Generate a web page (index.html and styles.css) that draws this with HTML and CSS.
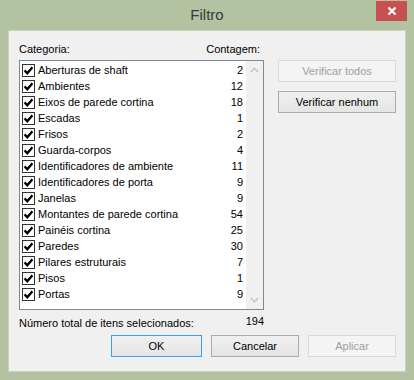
FILE: index.html
```html
<!DOCTYPE html>
<html lang="pt">
<head>
<meta charset="utf-8">
<title>Filtro</title>
<link rel="stylesheet" href="styles.css">
</head>
<body>
<div class="window">
  <div class="titlebar">
    <span></span>
    <span class="title">Filtro</span>
    <span class="close"><svg width="10" height="10" viewBox="0 0 10 10"><path d="M1.5 1.5 L8.5 8.5 M8.5 1.5 L1.5 8.5" stroke="#fff" stroke-width="2.2"/></svg></span>
  </div>
  <div class="client">
    <div class="main">
      <div class="leftcol">
        <div class="headers"><span>Categoria:</span><span>Contagem:</span></div>
        <div class="listbox">
          <div class="rows">
            <div class="row"><span class="cb"><svg viewBox="0 0 11 11"><path d="M1.6 5.4 L4.3 8.3 L9.4 2.2"/></svg></span><span class="name">Aberturas de shaft</span><span class="count">2</span></div>
            <div class="row"><span class="cb"><svg viewBox="0 0 11 11"><path d="M1.6 5.4 L4.3 8.3 L9.4 2.2"/></svg></span><span class="name">Ambientes</span><span class="count">12</span></div>
            <div class="row"><span class="cb"><svg viewBox="0 0 11 11"><path d="M1.6 5.4 L4.3 8.3 L9.4 2.2"/></svg></span><span class="name">Eixos de parede cortina</span><span class="count">18</span></div>
            <div class="row"><span class="cb"><svg viewBox="0 0 11 11"><path d="M1.6 5.4 L4.3 8.3 L9.4 2.2"/></svg></span><span class="name">Escadas</span><span class="count">1</span></div>
            <div class="row"><span class="cb"><svg viewBox="0 0 11 11"><path d="M1.6 5.4 L4.3 8.3 L9.4 2.2"/></svg></span><span class="name">Frisos</span><span class="count">2</span></div>
            <div class="row"><span class="cb"><svg viewBox="0 0 11 11"><path d="M1.6 5.4 L4.3 8.3 L9.4 2.2"/></svg></span><span class="name">Guarda-corpos</span><span class="count">4</span></div>
            <div class="row"><span class="cb"><svg viewBox="0 0 11 11"><path d="M1.6 5.4 L4.3 8.3 L9.4 2.2"/></svg></span><span class="name">Identificadores de ambiente</span><span class="count">11</span></div>
            <div class="row"><span class="cb"><svg viewBox="0 0 11 11"><path d="M1.6 5.4 L4.3 8.3 L9.4 2.2"/></svg></span><span class="name">Identificadores de porta</span><span class="count">9</span></div>
            <div class="row"><span class="cb"><svg viewBox="0 0 11 11"><path d="M1.6 5.4 L4.3 8.3 L9.4 2.2"/></svg></span><span class="name">Janelas</span><span class="count">9</span></div>
            <div class="row"><span class="cb"><svg viewBox="0 0 11 11"><path d="M1.6 5.4 L4.3 8.3 L9.4 2.2"/></svg></span><span class="name">Montantes de parede cortina</span><span class="count">54</span></div>
            <div class="row"><span class="cb"><svg viewBox="0 0 11 11"><path d="M1.6 5.4 L4.3 8.3 L9.4 2.2"/></svg></span><span class="name">Painéis cortina</span><span class="count">25</span></div>
            <div class="row"><span class="cb"><svg viewBox="0 0 11 11"><path d="M1.6 5.4 L4.3 8.3 L9.4 2.2"/></svg></span><span class="name">Paredes</span><span class="count">30</span></div>
            <div class="row"><span class="cb"><svg viewBox="0 0 11 11"><path d="M1.6 5.4 L4.3 8.3 L9.4 2.2"/></svg></span><span class="name">Pilares estruturais</span><span class="count">7</span></div>
            <div class="row"><span class="cb"><svg viewBox="0 0 11 11"><path d="M1.6 5.4 L4.3 8.3 L9.4 2.2"/></svg></span><span class="name">Pisos</span><span class="count">1</span></div>
            <div class="row"><span class="cb"><svg viewBox="0 0 11 11"><path d="M1.6 5.4 L4.3 8.3 L9.4 2.2"/></svg></span><span class="name">Portas</span><span class="count">9</span></div>
          </div>
          <div class="scrollbar">
            <svg class="arrow" width="9" height="6" viewBox="0 0 9 6"><path d="M0.8 5 L4.5 1.3 L8.2 5" fill="none" stroke="#c3c3c3" stroke-width="1.6"/></svg>
            <svg class="arrow" width="9" height="6" viewBox="0 0 9 6"><path d="M0.8 1 L4.5 4.7 L8.2 1" fill="none" stroke="#c3c3c3" stroke-width="1.6"/></svg>
          </div>
        </div>
        <div class="total"><span>Número total de itens selecionados:</span><span class="totalnum">194</span></div>
      </div>
      <div class="sidebtns">
        <button class="btn disabled">Verificar todos</button>
        <button class="btn">Verificar nenhum</button>
      </div>
    </div>
    <div class="footer">
      <button class="btn ok">OK</button>
      <button class="btn cancel">Cancelar</button>
      <button class="btn disabled apply">Aplicar</button>
    </div>
  </div>
</div>
</body>
</html>
```
FILE: styles.css
```css
* { box-sizing: border-box; }
html, body { margin: 0; padding: 0; }
body {
  width: 414px;
  height: 380px;
  overflow: hidden;
  font-family: "Liberation Sans", Arial, sans-serif;
  font-size: 11px;
  color: #000;
}
.window {
  width: 414px;
  height: 380px;
  background: #b3c3a1;
  display: flex;
  flex-direction: column;
}
.titlebar {
  height: 30px;
  display: grid;
  grid-template-columns: 1fr auto 1fr;
}
.title {
  font-size: 15px;
  color: #3a3a3a;
  line-height: 30px;
}
.close {
  justify-self: end;
  margin-top: 1px;
  margin-right: 7px;
  width: 31px;
  height: 20px;
  background: #c75050;
  display: flex;
  align-items: center;
  justify-content: center;
}
.close svg { display: block; }
.client {
  margin: 0 8px;
  height: 342px;
  background: #f0f0f0;
  border: 1px solid #c9d4bb;
  padding: 10px 9px 0 10px;
  display: flex;
  flex-direction: column;
}
.main {
  display: flex;
  gap: 14px;
}
.leftcol {
  width: 246px;
  display: flex;
  flex-direction: column;
}
.headers {
  display: flex;
  justify-content: space-between;
  height: 18px;
  line-height: 14px;
  padding-right: 4px;
  margin-top: 1px;
}
.listbox {
  height: 250px;
  border: 1px solid #828790;
  background: #fff;
  display: flex;
}
.rows {
  flex: 1;
  padding-top: 1px;
}
.row {
  height: 16px;
  display: flex;
  align-items: center;
  padding-left: 2px;
  padding-right: 3px;
}
.cb {
  width: 13px;
  height: 13px;
  border: 1px solid #333;
  background: #fff;
  margin-right: 3px;
  display: flex;
  align-items: center;
  justify-content: center;
}
.cb svg {
  width: 11px;
  height: 11px;
  display: block;
  fill: none;
  stroke: #000;
  stroke-width: 2.3;
}
.name { flex: 1; white-space: nowrap; }
.count { text-align: right; }
.scrollbar {
  width: 17px;
  background: #f0f0f0;
  display: flex;
  flex-direction: column;
  justify-content: space-between;
  align-items: center;
  padding: 6px 0 6px;
}
.arrow { display: block; }
.total {
  display: flex;
  justify-content: space-between;
  margin-top: 5px;
  height: 16px;
  line-height: 16px;
}
.totalnum { margin-top: -2px; }
.sidebtns {
  margin-top: 19px;
  display: flex;
  flex-direction: column;
  gap: 9px;
}
.btn {
  font-family: "Liberation Sans", Arial, sans-serif;
  font-size: 11px;
  color: #000;
  width: 118px;
  height: 22px;
  border: 1px solid #acacac;
  background: linear-gradient(#f0f0f0, #e5e5e5);
  padding: 0;
  margin: 0;
}
.btn.disabled {
  color: #a0a0a0;
  border-color: #d9d9d9;
  background: #f4f4f4;
}
.footer {
  margin-top: 4px;
  display: flex;
  justify-content: flex-end;
  gap: 9px;
}
.ok { width: 91px; border-color: #3c9ef0; background: linear-gradient(#f0f0f0, #e5e5e5); }
.cancel { width: 88px; }
.apply { width: 88px; }
```
